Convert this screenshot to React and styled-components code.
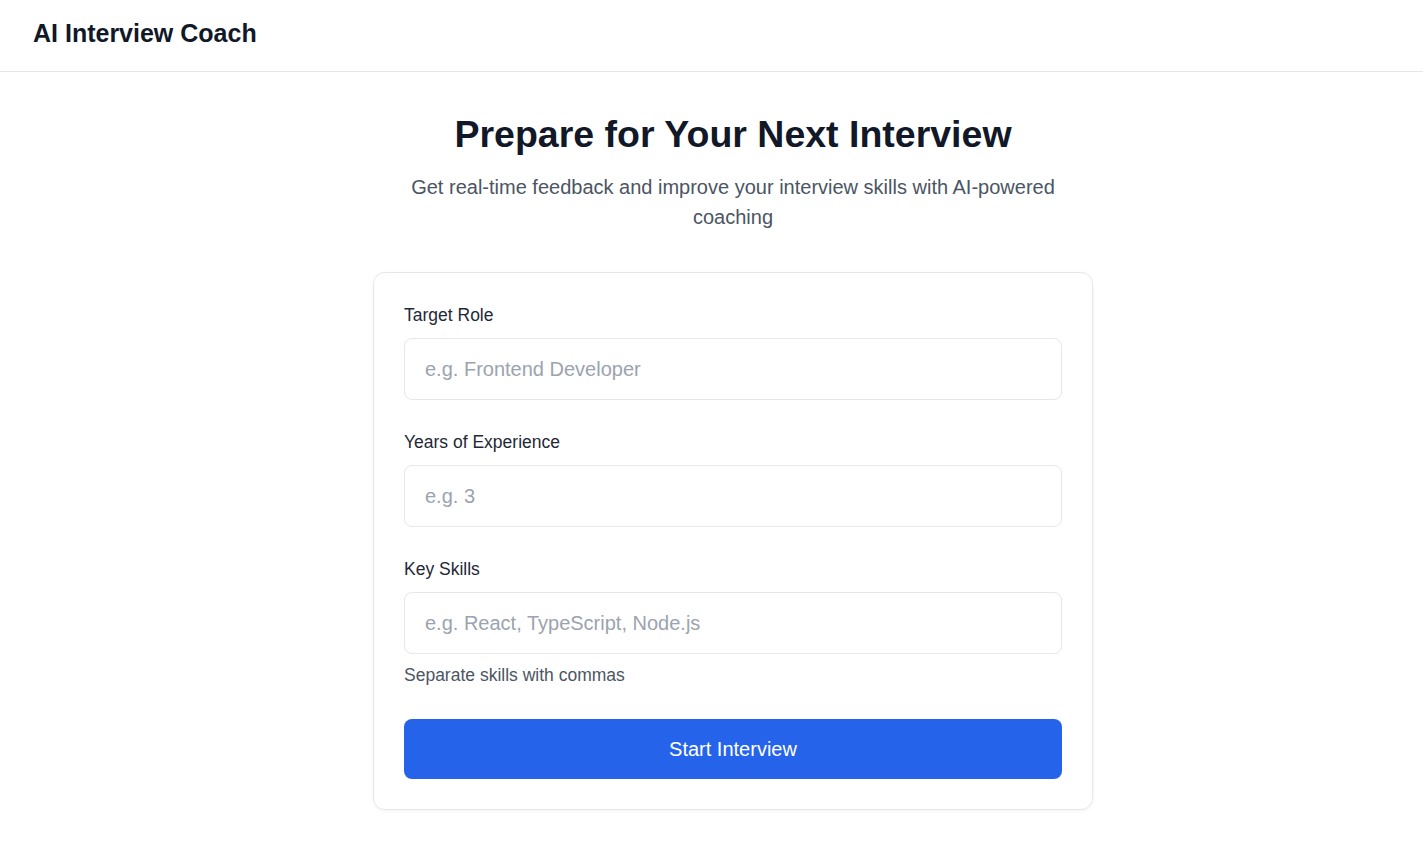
import React from "react";
import styled, { createGlobalStyle } from "styled-components";

const GlobalStyle = createGlobalStyle`
  * { box-sizing: border-box; }
  body {
    margin: 0;
    background: #ffffff;
    font-family: "Liberation Sans", Arial, sans-serif;
    color: #111827;
  }
`;

const Header = styled.header`
  height: 72px;
  border-bottom: 1px solid #e5e7eb;
  padding: 0 33px;
  display: flex;
  align-items: center;
`;

const Brand = styled.h1`
  margin: 0;
  margin-top: -5px;
  font-size: 25px;
  font-weight: 700;
  color: #111827;
`;

const Main = styled.main`
  display: flex;
  flex-direction: column;
  align-items: center;
  padding: 40px 0 40px 43px;
`;

const Title = styled.h2`
  margin: 0;
  font-size: 37.5px;
  line-height: 44px;
  font-weight: 700;
  color: #111827;
  text-align: center;
`;

const Subtitle = styled.p`
  margin: 16px 0 0;
  max-width: 660px;
  font-size: 20px;
  line-height: 30px;
  color: #4b5563;
  text-align: center;
`;

const Card = styled.form`
  margin-top: 40px;
  width: 720px;
  border: 1px solid #e5e7eb;
  border-radius: 12px;
  padding: 30px;
  box-shadow: 0 1px 3px rgba(0, 0, 0, 0.06);
  display: flex;
  flex-direction: column;
`;

const Field = styled.div`
  display: flex;
  flex-direction: column;
  margin-bottom: ${(p) => p.$gap || 30}px;
`;

const Label = styled.label`
  font-size: 17.5px;
  line-height: 24px;
  color: #1f2937;
  margin-bottom: 11px;
`;

const Input = styled.input`
  height: 62px;
  border: 1px solid #e5e7eb;
  border-radius: 8px;
  padding: 0 20px;
  font-family: inherit;
  font-size: 20px;
  color: #111827;
  outline: none;
  &::placeholder {
    color: #9ca3af;
  }
`;

const Hint = styled.span`
  margin-top: 9px;
  font-size: 17.5px;
  line-height: 24px;
  color: #4b5563;
`;

const Button = styled.button`
  height: 60px;
  border: none;
  border-radius: 8px;
  background: #2563eb;
  color: #ffffff;
  font-family: inherit;
  font-size: 20px;
  cursor: pointer;
`;

export default function App() {
  return (
    <>
      <GlobalStyle />
      <Header>
        <Brand>AI Interview Coach</Brand>
      </Header>
      <Main>
        <Title>Prepare for Your Next Interview</Title>
        <Subtitle>
          Get real-time feedback and improve your interview skills with AI-powered coaching
        </Subtitle>
        <Card onSubmit={(e) => e.preventDefault()}>
          <Field>
            <Label>Target Role</Label>
            <Input placeholder="e.g. Frontend Developer" />
          </Field>
          <Field>
            <Label>Years of Experience</Label>
            <Input placeholder="e.g. 3" />
          </Field>
          <Field $gap={32}>
            <Label>Key Skills</Label>
            <Input placeholder="e.g. React, TypeScript, Node.js" />
            <Hint>Separate skills with commas</Hint>
          </Field>
          <Button type="submit">Start Interview</Button>
        </Card>
      </Main>
    </>
  );
}
